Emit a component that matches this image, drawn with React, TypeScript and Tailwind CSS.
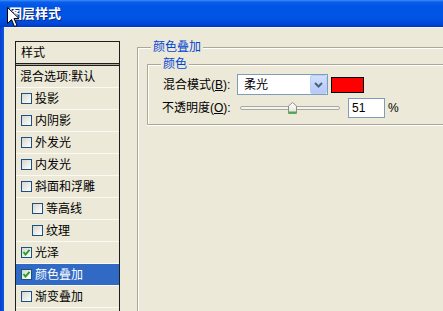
import React from "react";

function Check({ checked }: { checked?: boolean }) {
  return (
    <span className="w-[11px] h-[11px] border border-[#1C5180] bg-[linear-gradient(135deg,#D6D5CE,#FFFFFF)] flex items-center justify-center shrink-0">
      {checked && (
        <svg width="9" height="9" viewBox="0 0 9 9">
          <path d="M1.5 4 L3.5 6.5 L7.5 1.8" fill="none" stroke="#21A121" strokeWidth="1.9" />
        </svg>
      )}
    </span>
  );
}

function Row({
  label,
  checked,
  indent,
  selected,
}: {
  label: string;
  checked?: boolean;
  indent?: boolean;
  selected?: boolean;
}) {
  return (
    <div
      className={`h-[22px] border-b border-[#FAF9F4] flex items-center ${
        indent ? "pl-[16px]" : "pl-[5px]"
      } ${selected ? "bg-[#316AC5] text-white" : "text-black"}`}
    >
      <Check checked={checked} />
      <span className="ml-[3px] text-[12px] leading-[14px] whitespace-nowrap">{label}</span>
    </div>
  );
}

export default function App() {
  return (
    <div className="relative w-[443px] h-[311px] overflow-hidden bg-[#ECE9D8] flex flex-col font-['Liberation_Sans','Noto_Sans_CJK_SC',sans-serif]">
      {/* Title bar */}
      <div className="h-[27px] shrink-0 flex items-center pl-[9px] bg-[linear-gradient(to_bottom,#3D8DF7_0px,#0B5EEB_2px,#0055E6_6px,#0054E3_18px,#0047D6_24px,#0039C4_27px)]">
        <span className="text-white font-bold text-[13px] leading-[15px] tracking-[0px] [text-shadow:1px_1px_#0A2A8A]">
          图层样式
        </span>
      </div>

      {/* Body */}
      <div className="flex-1 flex min-h-0">
        <div className="w-[4px] shrink-0 bg-[linear-gradient(to_right,#0A3CCB,#0A58E2)]" />
        <div className="flex-1 flex items-start pl-[11px] min-w-0 border-t border-[#F6F4EC]">
          {/* Style list */}
          <div className="mt-[13px] w-[105px] shrink-0 border border-[#1E1E1E] flex flex-col">
            <div className="h-[21px] flex items-center pl-[5px] text-[12px] leading-[14px] text-black">样式</div>
            <div className="h-[3px] border-t border-b border-[#1E1E1E] bg-[#ACA899]" />
            <div className="h-[22px] border-b border-[#FAF9F4] flex items-center pl-[4px] text-[12px] leading-[14px] text-black whitespace-nowrap">
              混合选项:默认
            </div>
            <Row label="投影" />
            <Row label="内阴影" />
            <Row label="外发光" />
            <Row label="内发光" />
            <Row label="斜面和浮雕" />
            <Row label="等高线" indent />
            <Row label="纹理" indent />
            <Row label="光泽" checked />
            <Row label="颜色叠加" checked selected />
            <Row label="渐变叠加" />
            <div className="h-[22px]" />
          </div>

          {/* Right panel */}
          <fieldset className="ml-[17px] mt-[12px] w-[340px] h-[300px] shrink-0 min-w-0 border-t border-l border-[#ACA899] shadow-[inset_1px_1px_0_#FFFFFF] p-0 m-0">
            <legend className="ml-[13px] px-[2px] bg-[#ECE9D8] text-[#0046D5] text-[12px] leading-[14px]">颜色叠加</legend>
            <fieldset className="ml-[9px] mt-[3px] w-[330px] h-[68px] border-t border-l border-b border-[#ACA899] shadow-[inset_1px_1px_0_#FFFFFF,0_1px_0_#FFFFFF] p-0">
              <legend className="ml-[13px] px-[2px] bg-[#ECE9D8] text-[#0046D5] text-[12px] leading-[14px]">颜色</legend>
              <div className="flex flex-col pl-[15px] pt-[3px] text-[12px] leading-[14px] text-black">
                {/* Row 1 */}
                <div className="h-[21px] flex items-center">
                  <span className="w-[74px] whitespace-nowrap">
                    混合模式(<span className="underline">B</span>):
                  </span>
                  <div className="w-[91px] h-[21px] border border-[#7F9DB9] bg-white flex items-center">
                    <span className="flex-1 pl-[6px]">柔光</span>
                    <div className="w-[17px] h-[19px] rounded-[2px] border border-[#B9CEF9] bg-[linear-gradient(to_bottom,#D2DFFC,#B4C9F6)] flex items-center justify-center">
                      <svg width="9" height="6" viewBox="0 0 9 6">
                        <path d="M1 1 L4.5 4.5 L8 1" fill="none" stroke="#4D6185" strokeWidth="2" />
                      </svg>
                    </div>
                  </div>
                  <div className="ml-[3px] w-[33px] h-[16px] border border-black bg-[#FF0000]" />
                </div>
                {/* Row 2 */}
                <div className="mt-[3px] h-[20px] flex items-center">
                  <span className="w-[74px] whitespace-nowrap -ml-[1px] mr-[1px]">
                    不透明度(<span className="underline">O</span>):
                  </span>
                  <div className="ml-[3px] w-[100px] h-[20px] relative flex items-center">
                    <div className="w-full h-[4px] rounded-[2px] border border-[#A9A89F] bg-[#F4F3EE]" />
                    <svg className="absolute left-[48px] top-[4px]" width="9" height="12" viewBox="0 0 9 12">
                      <defs>
                        <linearGradient id="th" x1="0" y1="0" x2="0" y2="1">
                          <stop offset="0" stopColor="#FFFFFF" />
                          <stop offset="1" stopColor="#E2E0D6" />
                        </linearGradient>
                      </defs>
                      <path d="M0.5 4 L4.5 0.5 L8.5 4 L8.5 11.5 L0.5 11.5 Z" fill="url(#th)" stroke="#8E8C83" strokeWidth="1" />
                      <path d="M1 10.5 L8 10.5" stroke="#3AB54A" strokeWidth="2" />
                    </svg>
                  </div>
                  <div className="ml-[8px] w-[37px] h-[20px] border border-[#7F9DB9] bg-white flex items-center pl-[3px]">
                    51
                  </div>
                  <span className="ml-[3px]">%</span>
                </div>
              </div>
            </fieldset>
          </fieldset>
        </div>
      </div>

      {/* Mouse cursor */}
      <svg className="absolute left-[7px] top-[7px]" width="13" height="21" viewBox="0 0 13 21">
        <path
          d="M0.5 0.5 L0.5 16.5 L4.5 12.5 L7.5 19.5 L10 18.5 L7 11.5 L12 11.5 Z"
          fill="#FFFFFF"
          stroke="#000000"
          strokeWidth="1"
          strokeLinejoin="miter"
        />
      </svg>
    </div>
  );
}
